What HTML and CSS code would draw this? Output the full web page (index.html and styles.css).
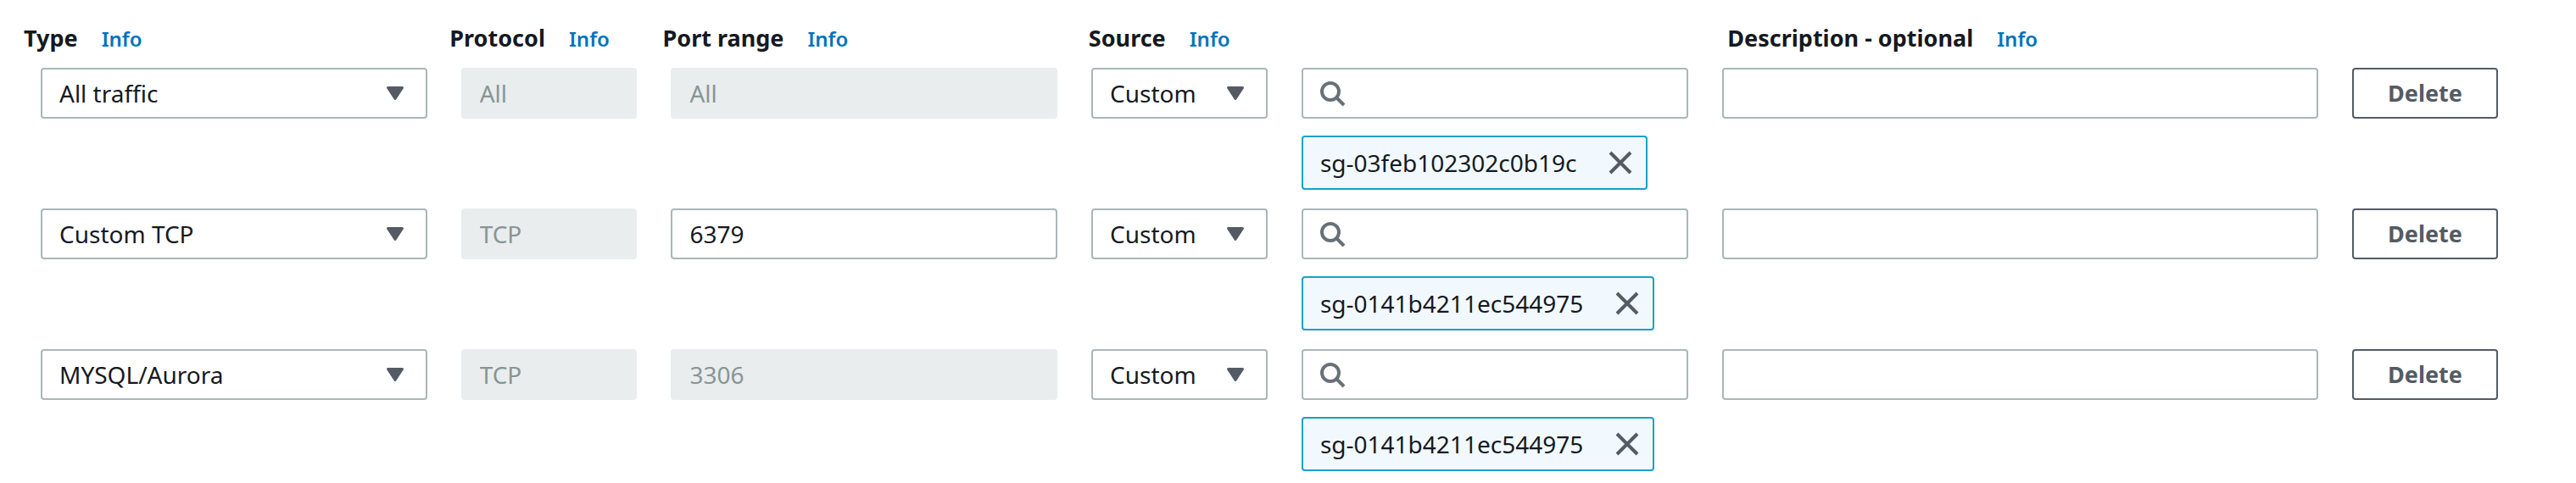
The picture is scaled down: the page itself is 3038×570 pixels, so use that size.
FILE: index.html
```
<!DOCTYPE html>
<html lang="en">
<head>
<meta charset="utf-8">
<meta name="viewport" content="width=device-width, initial-scale=1">
<title>Inbound rules</title>
<link rel="stylesheet" href="styles.css">
</head>
<body>
<svg class="sprite" aria-hidden="true">
  <symbol id="caret" viewBox="0 0 32 32"><path d="M7.500 9.500h17L16 22.500z" fill="currentColor" stroke="currentColor" stroke-width="3" stroke-linejoin="round"/></symbol>
  <symbol id="search" viewBox="0 0 32 32"><g fill="none" stroke="currentColor" stroke-width="4"><circle cx="14" cy="14" r="10"/><path d="M21 21l9 9"/></g></symbol>
  <symbol id="close" viewBox="0 0 32 32"><path d="M4 4l24 24M28 4L4 28" fill="none" stroke="currentColor" stroke-width="4"/></symbol>
</svg>
<main class="rules">
  <header class="head">
    <div class="head-cell span-2"><span id="h-type">Type</span><a class="info" href="#type">Info</a></div>
    <div class="head-cell"><span id="h-protocol">Protocol</span><a class="info" href="#protocol">Info</a></div>
    <div class="head-cell span-2"><span id="h-port">Port range</span><a class="info" href="#port">Info</a></div>
    <div class="head-cell span-3"><span id="h-source">Source</span><a class="info" href="#source">Info</a></div>
    <div class="head-cell"><span id="h-description">Description - optional</span><a class="info" href="#description">Info</a></div>
  </header>

  <section class="rule">
    <div class="select span-2"><select class="field" aria-labelledby="h-type"><option>All traffic</option></select><svg class="icon caret"><use href="#caret"/></svg></div>
    <input class="field" type="text" value="All" aria-labelledby="h-protocol" disabled>
    <input class="field span-2" type="text" value="All" aria-labelledby="h-port" disabled>
    <div class="select"><select class="field" aria-labelledby="h-source"><option>Custom</option></select><svg class="icon caret"><use href="#caret"/></svg></div>
    <div class="source span-2">
      <div class="search"><input class="field" type="text" aria-label="Search source"><svg class="icon"><use href="#search"/></svg></div>
      <div class="token"><span>sg-03feb102302c0b19c</span><button class="remove" type="button" aria-label="Remove sg-03feb102302c0b19c"><svg class="icon"><use href="#close"/></svg></button></div>
    </div>
    <input class="field span-3" type="text" aria-labelledby="h-description">
    <button class="delete" type="button">Delete</button>
  </section>

  <section class="rule">
    <div class="select span-2"><select class="field" aria-labelledby="h-type"><option>Custom TCP</option></select><svg class="icon caret"><use href="#caret"/></svg></div>
    <input class="field" type="text" value="TCP" aria-labelledby="h-protocol" disabled>
    <input class="field span-2" type="text" value="6379" aria-labelledby="h-port">
    <div class="select"><select class="field" aria-labelledby="h-source"><option>Custom</option></select><svg class="icon caret"><use href="#caret"/></svg></div>
    <div class="source span-2">
      <div class="search"><input class="field" type="text" aria-label="Search source"><svg class="icon"><use href="#search"/></svg></div>
      <div class="token"><span>sg-0141b4211ec544975</span><button class="remove" type="button" aria-label="Remove sg-0141b4211ec544975"><svg class="icon"><use href="#close"/></svg></button></div>
    </div>
    <input class="field span-3" type="text" aria-labelledby="h-description">
    <button class="delete" type="button">Delete</button>
  </section>

  <section class="rule">
    <div class="select span-2"><select class="field" aria-labelledby="h-type"><option>MYSQL/Aurora</option></select><svg class="icon caret"><use href="#caret"/></svg></div>
    <input class="field" type="text" value="TCP" aria-labelledby="h-protocol" disabled>
    <input class="field span-2" type="text" value="3306" aria-labelledby="h-port" disabled>
    <div class="select"><select class="field" aria-labelledby="h-source"><option>Custom</option></select><svg class="icon caret"><use href="#caret"/></svg></div>
    <div class="source span-2">
      <div class="search"><input class="field" type="text" aria-label="Search source"><svg class="icon"><use href="#search"/></svg></div>
      <div class="token"><span>sg-0141b4211ec544975</span><button class="remove" type="button" aria-label="Remove sg-0141b4211ec544975"><svg class="icon"><use href="#close"/></svg></button></div>
    </div>
    <input class="field span-3" type="text" aria-labelledby="h-description">
    <button class="delete" type="button">Delete</button>
  </section>
</main>
</body>
</html>
```
FILE: styles.css
```
* {
  box-sizing: border-box;
}

body {
  margin: 0;
  background: #fff;
  color: #16191f;
  font: 28px/38px "Noto Sans", "Open Sans", sans-serif;
}

.sprite {
  display: none;
}

.rules {
  display: flex;
  flex-direction: column;
  gap: 22px;
  padding-top: 26px;
}

.head {
  display: grid;
  grid-template-columns: repeat(8, minmax(0, 251fr)) minmax(0, 1000fr);
  height: 40px;
  padding-left: 28px;
  margin-bottom: -8px;
}

.head-cell {
  display: flex;
  align-items: baseline;
  gap: 28px;
  font-size: 27px;
  font-weight: 700;
  white-space: nowrap;
}

.info {
  color: #0073bb;
  font-size: 24px;
  font-weight: 600;
  text-decoration: none;
}

.rule {
  display: grid;
  grid-template-columns: repeat(11, minmax(0, 1fr)) 172px;
  align-items: start;
  gap: 40px;
  padding: 0 92px 0 48px;
}

.span-2 {
  grid-column: span 2;
}

.span-3 {
  grid-column: span 3;
}

.field {
  appearance: none;
  width: 100%;
  height: 60px;
  margin: 0;
  padding: 0 20px;
  border: 2px solid #aab7b8;
  border-radius: 4px;
  background: #fff;
  color: inherit;
  font: inherit;
}

.field:disabled {
  border-color: #e9eded;
  background: #e9eded;
  color: #879596;
}

.select,
.search {
  display: grid;
  align-items: center;
}

.select > *,
.search > * {
  grid-area: 1 / 1;
}

.icon {
  display: block;
  width: 32px;
  height: 32px;
  color: #545b64;
  pointer-events: none;
}

.caret {
  justify-self: end;
  margin-right: 22px;
}

.search .field {
  padding-left: 60px;
}

.search .icon {
  margin-left: 20px;
  color: #687078;
}

.source {
  display: flex;
  flex-direction: column;
  align-items: flex-start;
  gap: 20px;
}

.search {
  width: 100%;
}

.token {
  display: flex;
  align-items: center;
  gap: 36px;
  height: 64px;
  padding: 0 14px 0 20px;
  border: 2px solid #16a2c9;
  border-radius: 4px;
  background: #f1f9ff;
}

.remove {
  padding: 0;
  border: 0;
  background: none;
}

.delete {
  height: 60px;
  padding: 0;
  border: 2px solid #545b64;
  border-radius: 4px;
  background: #fff;
  color: #545b64;
  font: inherit;
  font-size: 27px;
  font-weight: 700;
}
```
